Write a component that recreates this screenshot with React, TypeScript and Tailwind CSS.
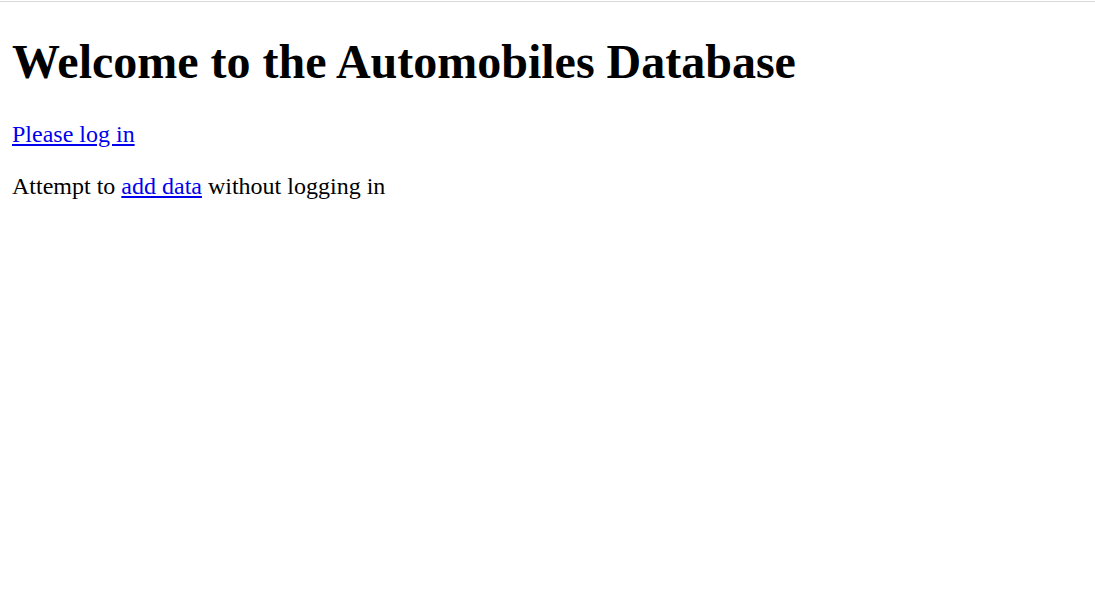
export default function App() {
  return (
    <div className="min-h-[595px] bg-white pt-px" style={{ fontFamily: '"Liberation Serif", "Times New Roman", serif' }}>
      <div className="border-t border-[#d9d9d9] px-[12px] py-[12px]">
        <h1 className="mt-[20px] mb-[32px] text-[48px] font-bold leading-[1.15] text-black">
          Welcome to the Automobiles Database
        </h1>
        <p className="my-[24px] text-[24px] leading-[1.15] text-black">
          <a href="#" className="text-[#0000ee] underline">Please log in</a>
        </p>
        <p className="my-[24px] text-[24px] leading-[1.15] text-black">
          Attempt to <a href="#" className="text-[#0000ee] underline">add data</a> without logging in
        </p>
      </div>
    </div>
  );
}
